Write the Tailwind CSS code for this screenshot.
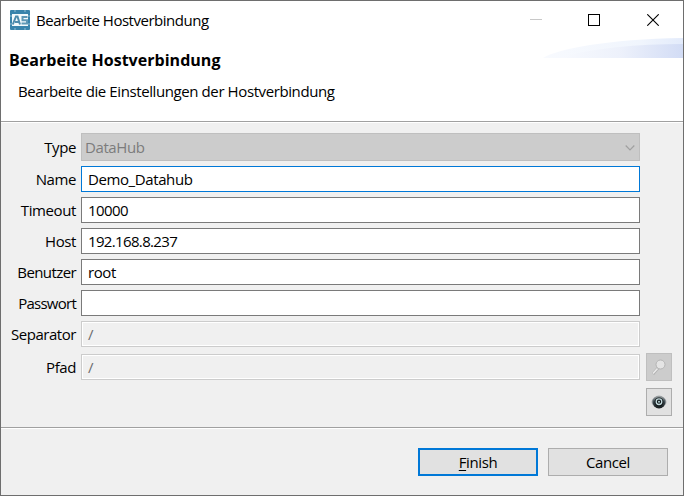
<!DOCTYPE html>
<html lang="de">
<head>
<meta charset="utf-8">
<title>Bearbeite Hostverbindung</title>
<script src="https://cdn.jsdelivr.net/npm/@tailwindcss/browser@4"></script>
</head>
<body class="w-[684px] h-[496px] overflow-hidden">
<div class="w-[684px] h-[496px] border border-[#6e6e6e] bg-[#f0f0f0] flex flex-col font-['Open_Sans','Noto_Sans',sans-serif] text-[15px] tracking-[-0.4px] leading-[20px] text-black">
  <header class="relative h-[120px] bg-white shrink-0">
    <div class="flex items-center h-[37px] pl-[9px]">
      <svg class="size-5 shrink-0" viewBox="0 0 20 20">
        <rect width="20" height="20" rx="1" fill="#3984ac"/>
        <path d="M0 6h2M0 14h2M5 0v2M15 0v2M18 6h2M18 14h2M5 18v2M15 18v2" stroke="#9fc3d6" stroke-width="1.500" opacity=".6"/>
        <rect x="2" y="4" width="16" height="12" fill="#f4fafc"/>
        <path d="M2.800 14.500 6 6.500h1.500L10 14.500M5 12h4" fill="none" stroke="#4f8cad" stroke-width="2"/>
        <path d="M17.500 7h-5v3.200h4.500v3.300h-5.500" fill="none" stroke="#5f98b6" stroke-width="2"/>
      </svg>
      <h1 class="ml-[6px] grow whitespace-nowrap tracking-[-0.48px]">Bearbeite Hostverbindung</h1>
      <div class="flex items-center">
        <div class="w-[58px] flex justify-center"><div class="w-3 h-px bg-[#c8c8c8]"></div></div>
        <div class="w-[58px] flex justify-center"><div class="size-3 border border-black"></div></div>
        <div class="w-[60px] flex justify-center"><svg class="size-3" viewBox="0 0 12 12"><path d="M.3.3l11.400 11.400M11.700.3.3 11.700" stroke="#000" stroke-width="1.100"/></svg></div>
      </div>
    </div>
    <h2 class="ml-2 mt-[12px] text-[16px] tracking-[0.03px] font-bold whitespace-nowrap w-max">Bearbeite Hostverbindung</h2>
    <p class="ml-[17px] mt-[11px] whitespace-nowrap w-max">Bearbeite die Einstellungen der Hostverbindung</p>
    <svg class="absolute right-0 top-[37px] w-[140px] h-5" viewBox="0 0 140 20">
      <defs>
        <linearGradient id="a"><stop offset="0" stop-color="#f8fafe"/><stop offset=".7" stop-color="#f0f5fd"/><stop offset="1" stop-color="#e3ebfb"/></linearGradient>
        <linearGradient id="b"><stop offset="0" stop-color="#f8fafe"/><stop offset=".5" stop-color="#edf1fb"/><stop offset="1" stop-color="#d2dcf5"/></linearGradient>
      </defs>
      <path d="M0 20C14 11 65 1 140 0V20Z" fill="url(#a)"/>
      <path d="M14 20C50 10 95 6 140 6V20Z" fill="url(#b)"/>
    </svg>
  </header>
  <div class="h-px bg-[#a0a0a0] shrink-0"></div>
  <div class="h-px bg-white shrink-0"></div>

  <main class="h-[304px] shrink-0 pt-[10px] pr-[10px]">
    <div class="flex flex-col gap-[5px]">
      <div class="flex items-center h-7"><span class="w-[75px] text-right">Type</span><div class="ml-[5px] w-[559px] h-7 bg-[#ccc] border border-[#bfbfbf] text-[#7c7c7c] flex items-center justify-between pl-[3px] pr-[4px]"><span>DataHub</span><svg class="mt-px w-[10px] h-[6px]" viewBox="0 0 10 6"><path d="M.7.5 5 4.800 9.300.5" fill="none" stroke="#a0a0a0" stroke-width="1.200"/></svg></div></div>
      <div class="flex items-center h-[26px]"><span class="w-[75px] text-right">Name</span><div class="ml-[5px] w-[559px] h-[26px] bg-white border border-[#0078d7] flex items-center pl-[6px]"><span>Demo_Datahub</span></div></div>
      <div class="flex items-center h-[26px]"><span class="w-[75px] text-right">Timeout</span><div class="ml-[5px] w-[559px] h-[26px] bg-white border border-[#7a7a7a] flex items-center pl-[6px]"><span class="tracking-[-0.55px]">10000</span></div></div>
      <div class="flex items-center h-[26px]"><span class="w-[75px] text-right">Host</span><div class="ml-[5px] w-[559px] h-[26px] bg-white border border-[#7a7a7a] flex items-center pl-[6px]"><span class="tracking-[-0.65px]">192.168.8.237</span></div></div>
      <div class="flex items-center h-[26px]"><span class="w-[75px] text-right tracking-[-0.6px]">Benutzer</span><div class="ml-[5px] w-[559px] h-[26px] bg-white border border-[#7a7a7a] flex items-center pl-[6px]"><span>root</span></div></div>
      <div class="flex items-center h-[26px]"><span class="w-[75px] text-right tracking-[-0.75px]">Passwort</span><div class="ml-[5px] w-[559px] h-[26px] bg-white border border-[#7a7a7a]"></div></div>
      <div class="flex items-center h-[26px]"><span class="w-[75px] text-right tracking-[-0.45px]">Separator</span><div class="ml-[5px] w-[559px] h-[26px] border border-[#ccc] ring-1 ring-inset ring-white text-[#6d6d6d] flex items-center pl-[6px]"><span>/</span></div></div>
    </div>
    <div class="mt-[6px] flex items-center h-7"><span class="w-[75px] text-right">Pfad</span><div class="ml-[5px] w-[559px] h-[26px] border border-[#ccc] ring-1 ring-inset ring-white text-[#6d6d6d] flex items-center pl-[6px]"><span>/</span></div>
      <div class="ml-[6px] w-[26px] h-7 bg-[#ccc] border border-[#bfbfbf]"><svg class="w-6 h-[26px]" viewBox="0 0 24 26"><path d="M11 14 6 20" stroke="#b0b0b0" stroke-width="2.800"/><path d="M10.500 14.500 6 19.500" stroke="#eaeaea" stroke-width="1.700"/><circle cx="13.500" cy="10.500" r="4.500" fill="#e4e4e4" stroke="#b5b5b5"/></svg></div>
    </div>
    <div class="mt-[7px] ml-[645px] w-[26px] h-7 bg-[#e1e1e1] border border-[#adadad]"><svg class="w-6 h-[26px]" viewBox="0 0 24 26">
      <defs><linearGradient id="e" x2="0" y2="1"><stop offset="0" stop-color="#a7acae"/><stop offset=".5" stop-color="#3b474d"/><stop offset="1" stop-color="#15191b"/></linearGradient></defs>
      <ellipse cx="12" cy="13" rx="7.500" ry="5.800" fill="#a9adb0"/><circle cx="12" cy="13" r="6.500" fill="url(#e)"/><circle cx="12" cy="13" r="4.500" fill="#101719"/><circle cx="12" cy="12.700" r="2.800" fill="none" stroke="#c4dade" stroke-width="1.300"/><circle cx="12" cy="12.700" r="1" fill="#b5d0d4"/>
    </svg></div>
  </main>

  <div class="h-px bg-[#a0a0a0] shrink-0"></div>
  <div class="h-px bg-white shrink-0"></div>
  <footer class="flex justify-end gap-[10px] pt-[19px] pr-[15px]">
    <button class="w-[120px] h-7 bg-[#e1e1e1] border-2 border-[#0078d7] flex items-center justify-center"><span><span class="underline underline-offset-2 decoration-1">F</span>inish</span></button>
    <button class="w-[120px] h-7 bg-[#e1e1e1] border border-[#adadad] flex items-center justify-center"><span>Cancel</span></button>
  </footer>
</div>
</body>
</html>
